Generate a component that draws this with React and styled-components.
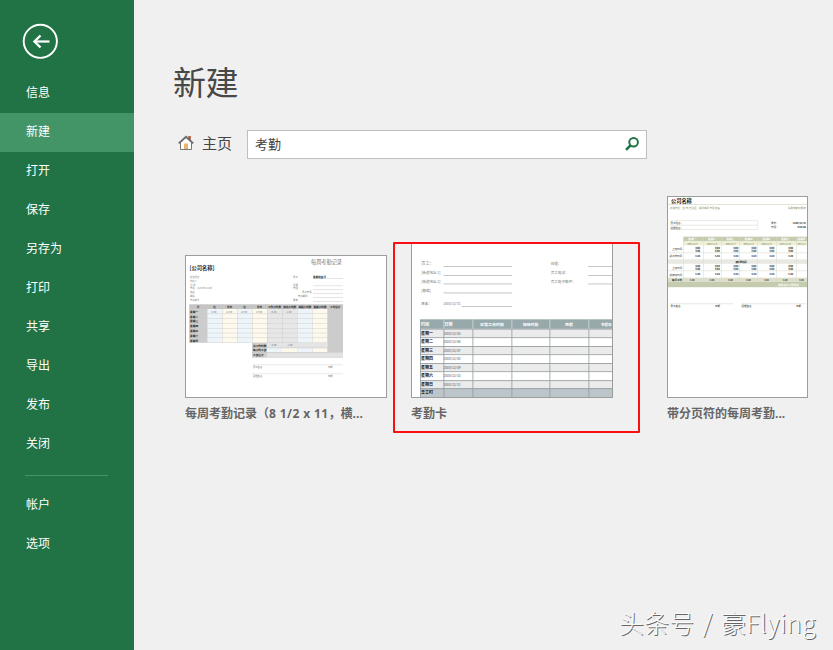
import React from "react";
import styled, { createGlobalStyle } from "styled-components";

const Global = createGlobalStyle`
  * { box-sizing: border-box; }
  body { margin: 0; overflow: hidden; }
`;

const Page = styled.div`
  position: relative;
  display: flex;
  width: 833px;
  height: 650px;
  overflow: hidden;
  background: #f0f0f0;
  color: #444;
  font-family: "Open Sans", "Noto Sans CJK SC", sans-serif;
`;

const Sidebar = styled.nav`
  flex: none;
  width: 134px;
  background: #217346;
`;

const BackButton = styled.button`
  display: block;
  width: 36px;
  height: 36px;
  margin: 23px 0 15px 22px;
  padding: 0;
  border: 0;
  background: none;
  svg { display: block; }
`;

const NavItem = styled.a`
  display: flex;
  align-items: center;
  height: 39px;
  padding: 0 0 4px 26px;
  background: ${(p) => (p.$active ? "#439467" : "transparent")};
  color: #fff;
  font-family: "Noto Sans CJK SC", sans-serif;
  font-size: 12px;
  line-height: 18px;
`;

const Divider = styled.hr`
  width: 83px;
  height: 1px;
  margin: 11px 0 10px 25px;
  border: 0;
  background: #439467;
`;

const Main = styled.main`
  flex: 1;
  min-width: 0;
  padding-top: 57px;
`;

const Title = styled.h1`
  margin: 0 0 0 39px;
  font: 400 33px/48px "Noto Sans CJK SC", sans-serif;
  letter-spacing: -0.5px;
  color: #484848;
`;

const SearchRow = styled.div`
  display: flex;
  align-items: center;
  height: 29px;
  margin: 25px 0 0 43px;
`;

const HomeLink = styled.a`
  display: flex;
  align-items: center;
  gap: 7px;
  width: 70px;
  padding-bottom: 3px;
  font: 15px/22px "Noto Sans CJK SC", sans-serif;
`;

const SearchBox = styled.div`
  display: flex;
  align-items: center;
  justify-content: space-between;
  width: 400px;
  height: 29px;
  padding: 0 6px 1px 7px;
  border: 1px solid #bfbfbf;
  background: #fff;
  font: 13px/20px "Noto Sans CJK SC", sans-serif;
`;

const Gallery = styled.div`
  display: flex;
  align-items: flex-end;
  height: 274px;
  padding-left: 51px;
`;

const Caption = styled.figcaption`
  height: 35px;
  padding-top: 7px;
  overflow: hidden;
  white-space: nowrap;
  font-size: 12px;
  font-weight: 700;
  line-height: 18px;
  color: #666;
`;

const PaperSize = styled.span`
  letter-spacing: 0.4px;
`;

const Card = styled.figure`
  flex: none;
  width: ${(p) => p.$width}px;
  margin: 0 ${(p) => p.$gap || 0}px 0 0;
`;

const SelectedCard = styled(Card)`
  padding-left: 16px;
  border: 2px solid #fa0f12;
  border-radius: 1px;
  ${Caption} { height: 33px; }
`;

const Sheet = styled.svg`
  display: block;
  border: 1px solid #9a9f9c;
  border-top-width: ${(p) => (p.$openTop ? 0 : 1)}px;
  background: #fff;
`;

const Watermark = styled.div`
  position: absolute;
  left: 619px;
  top: 604px;
  white-space: nowrap;
  font: 300 25px/36px "Noto Sans CJK SC", sans-serif;
  word-spacing: 3px;
  color: #fafafa;
  text-shadow: 1px 1px 0.5px #666;
`;

const WatermarkName = styled.span`
  letter-spacing: 0.45px;
`;

const MINI = '"Noto Sans CJK SC", sans-serif';

// Text inside a miniature sheet.
const T = ({ x, y, s = 2.8, c = "#777", b, a, children, w }) => (
  <text x={x} y={y} fontSize={s} fill={c} fontWeight={b ? 700 : 400} textAnchor={a}
    textLength={w} lengthAdjust="spacingAndGlyphs" fontFamily={MINI}>{children}</text>
);

const Line = ({ x1, x2, y, c = "#a8b0b0" }) => (
  <rect x={x1} y={y} width={x2 - x1} height="0.7" fill={c} />
);

const weekdays = ["一", "二", "三", "四", "五", "六", "日"];

const BLUE = "#edf5fa";
const CREAM = "#fdf9ec";
const weekCols = [
  [3.3, "#cccccc", "日"], [21, BLUE, "在"], [36, CREAM, "外出"], [51, BLUE, "在"],
  [66, CREAM, "外出"], [81, "#e7e7e7", "工作小时数"], [96, "#e7e7e7", "加班小时数"],
  [111.3, BLUE, "病假小时数"], [126.5, CREAM, "假期小时数"], [141.5, "#cccccc", "工时总计"], [157],
];

function WeeklySheet() {
  return (
    <Sheet width="202" height="143" viewBox="0 0 200 141">
      <T x="3.5" y="14" s="5.3" c="#222" b w="25">[公司名称]</T>
      <T x="125" y="7.6" s="5.3" c="#777" w="31">每周考勤记录</T>
      {["街道地址", "地址 2", "省/市", "电话：(425)555-0100", "传真", "邮编", "电子邮件"].map((t, i) => (
        <T key={t} x="4" y={22 + i * 3.8} s="2.3" c="#888">{t}</T>
      ))}
      {[["员工", 22, 107], ["经理", 29.5, 107], ["电话", 33.4, 107], ["员工电话", 37.3, 116], ["电子邮件", 41.2, 112], ["周末", 45, 107]].map(([t, y, x]) => (
        <g key={t}><T x={x} y={y} s="2.4">{t}</T><Line x1={127} x2={157} y={y} c="#d9d9d9" /></g>
      ))}
      <T x="127" y="22" s="2.6" c="#111" b>星期结束日</T>
      {weekCols.slice(0, -1).map(([x, c, name], i) => {
        const w = weekCols[i + 1][0] - x;
        return (
          <g key={i}>
            <rect x={x} y="48.3" width={w} height="4.8" fill="#c4c4c4" />
            <rect x={x} y="53" width={w} height={i < 5 ? 33.6 : 43} fill={c} />
            <T x={x + w / 2} y="51.8" s="2.6" c="#222" b a="middle">{name}</T>
            <rect x={x} y="48.3" width=".4" height={i < 5 ? 38.3 : 52} fill="#c8c8c8" />
          </g>
        );
      })}
      {weekdays.map((d, i) => (
        <g key={d}>
          <T x="4" y={56.7 + i * 4.8} s="2.7" c="#111" b>星期{d}</T>
          <rect x="3.3" y={57.6 + i * 4.8} width="138.2" height=".45" fill="#cbcbcb" />
        </g>
      ))}
      {[28, 43, 58, 73, 88, 103].map((x, i) => (
        <T key={x} x={x} y="56.5" s="2.5" a="middle">{["8:00", "11:30", "12:30", "17:00", "8.00", "1.00"][i]}</T>
      ))}
      <rect x="66" y="87" width="75.5" height="4.8" fill="#e4e4e4" />
      <rect x="81" y="91.8" width="15" height="4.8" fill={BLUE} />
      <rect x="96" y="91.8" width="15.3" height="4.8" fill={CREAM} />
      <rect x="81" y="96.3" width="76" height="4.6" fill="#e2e2e2" />
      <rect x="66" y="87" width="15" height="14" fill="#cecece" />
      {["总工作时数", "每小时工资", "工资合计"].map((t, i) => (
        <g key={t}>
          <T x="67" y={90.6 + i * 4.7} s="2.7" c="#111" b>{t}</T>
          <Line x1={66} x2={157} y={91.5 + i * 4.7} c="#c9c9c9" />
        </g>
      ))}
      <T x="88" y="90" s="2.5" a="middle">8.00</T>
      <T x="104" y="90" s="2.5" a="middle">1.00</T>
      {[109, 118].map((y, i) => (
        <g key={y}>
          <Line x1={66} x2={157} y={y - 0.5} c="#e0e0e0" />
          <T x="67" y={y + 2.5} s="2.3">{i ? "经理签名" : "员工签名"}</T>
          <T x="142" y={y + 2.5} s="2.3">日期</T>
        </g>
      ))}
    </Sheet>
  );
}

const cardRows = [84.7, 93.3, 102, 110.3, 119, 127.3, 136.3, 144.3, 153];
const cardCols = [31.5, 60.5, 99.5, 137.5, 176.5];
const cardDates = ["05", "06", "07", "08", "09", "10", "11"];

function TimeCardSheet() {
  return (
    <Sheet $openTop width="202" height="154" viewBox="0 0 200 153">
      {[["员工：", 22], ["[街道地址 1]", 31], ["[街道地址 2]", 39.6], ["[邮编]", 48.6], ["周末：", 62]].map(([t, y], i) => (
        <g key={t}>
          <T x="9.3" y={y - 1} s={i ? 3.5 : 4.1}>{t}</T>
          <Line x1={i === 4 ? 49.7 : 31.5} x2={100} y={y} />
        </g>
      ))}
      <T x="31.5" y="61" s="3.5" w="17">2008/12/31</T>
      {[["经理：", 22], ["员工电话：", 31], ["员工电子邮件：", 39.6]].map(([t, y]) => (
        <g key={t}><T x="138.7" y={y - 1} s="3.6">{t}</T><Line x1={176} x2={200} y={y} /></g>
      ))}
      <rect x="8" y="75.3" width="192" height="10" fill="#97a9aa" />
      {cardRows.slice(0, -1).map((y, i) => (
        <g key={y}>
          <rect x="8" y={y} width="192" height={cardRows[i + 1] - y} fill={i === 7 ? "#bcc5ca" : i % 2 ? "#fff" : "#ebebeb"} />
          <rect x="8" y={y} width="192" height=".8" fill="#8f989b" />
          <T x="9" y={y + 6} s="4" c="#111" b>{i === 7 ? "总工时" : `星期${weekdays[i]}`}</T>
          {i < 7 && <T x="31.5" y={y + 6} s="3.5" c="#555" w="17">{`2008/12/${cardDates[i]}`}</T>}
        </g>
      ))}
      {[8, ...cardCols].map((x) => <rect key={x} x={x} y="85" width=".8" height="68" fill="#929b9e" />)}
      {cardCols.map((x) => <rect key={x} x={x} y="75.3" width=".8" height="9.5" fill="#d5dddd" />)}
      <T x="9" y="82" s="4" c="#fff" b>时间</T>
      <T x="32.5" y="82" s="4" c="#fff" b>日期</T>
      <T x="80" y="82" s="3.9" c="#fff" b a="middle" w="24">正常工作时数</T>
      <T x="118.5" y="82" s="3.9" c="#fff" b a="middle">加班时数</T>
      <T x="157" y="82" s="3.9" c="#fff" b a="middle">病假</T>
      <T x="189" y="82" s="3.9" c="#fff" b w="10.5">节假日</T>
    </Sheet>
  );
}

const breakCols = [15.3, 35, 53.5, 71.5, 89.5, 108.3, 128];

function BreaksSheet() {
  return (
    <Sheet width="141" height="202" viewBox="0 0 139 200">
      <T x="3" y="6" s="5.2" c="#111" b>公司名称</T>
      <Line x1={0} x2={139} y={7.3} c="#d5d9c5" />
      <T x="2" y="12" s="2.6" c="#8b9464" w="50">街道地址，省/市/自治区，邮政编码 电话 传真</T>
      <T x="120" y="12" s="2.6" c="#8b9464" w="18">每周考勤记录表</T>
      {[23.4, 27.8, 32.3].map((y) => <Line key={y} x1={2} x2={90} y={y} c="#e1e3d9" />)}
      <rect x="89.5" y="23.5" width=".6" height="9" fill="#e1e3d9" />
      {[["员工姓名：", "周末：", "2008/12/31"], ["经理姓名：", "电话：", "8:00:00"]].map(([l, m, r], i) => (
        <g key={l}>
          <T x="2.5" y={27 + i * 4.6} s="2.5" c="#333">{l}</T>
          <T x="103" y={26.5 + i * 4.6} s="2.5" c="#333">{m}</T>
          <T x="138" y={26.5 + i * 4.6} s="2.4" c="#111" b a="end">{r}</T>
        </g>
      ))}
      <rect x="15.3" y="39.7" width="124" height="4.7" fill="#c4cbaf" />
      <rect x="15.3" y="44.3" width="124" height="4" fill="#eef0d5" />
      <rect x="0" y="62.3" width="139" height="4.5" fill="#e8e9e2" />
      <rect x="0" y="80.7" width="139" height="4.3" fill="#dcdfcb" />
      <rect x="0" y="85" width="139" height="5.2" fill="#c4cbaf" />
      {[55.5, 73.5].map((y) => <Line key={y} x1={0} x2={139} y={y} c="#dfe1d5" />)}
      <T x="73" y="65.8" s="2.8" c="#111" b a="middle">加班时间</T>
      {[["上班时间", 53], ["总工作时间", 60], ["上班时间", 71.5], ["总加班时间", 78.5], ["每日工时", 84]].map(([t, y], i) => (
        <T key={i} x="14" y={y} s="2.5" c="#222" b={i === 4} a="end">{t}</T>
      ))}
      {breakCols.map((x, i) => {
        const last = i === 6;
        const mid = last ? x + 5.5 : x + 9;
        return (
          <g key={x}>
            <rect x={x} y="39.7" width=".5" height="45" fill="#d7dac9" />
            <T x={mid} y="43.3" s="2.7" c="#fff" b a="middle">星期{weekdays[i]}</T>
            <T x={mid} y="47.5" s="2.2" c="#757c55" a="middle" w={last ? 8.5 : undefined}>{`2008/12/${i + 5}`}</T>
            {!last && [49.5, 67.8].map((y) => (
              <g key={y}>
                <rect x={x + 12} y={y} width="4.8" height="5.8" fill="#e4e5df" />
                <T x={x + 14.4} y={y + 2.6} s="2.2" c="#222" b a="middle">8:00</T>
                <T x={x + 14.4} y={y + 5.2} s="2.2" c="#222" b a="middle">5:00</T>
                <T x={x + 14.4} y={y + 10} s="2.3" c="#111" b a="middle">8.00</T>
              </g>
            ))}
            <T x={mid} y="84" s="2.2" c="#333" b a="middle">8.00</T>
          </g>
        );
      })}
      <T x="110" y="88.8" s="2.6" c="#fff" b>本周总计工作时间</T>
      <Line x1={2} x2={65} y={106.5} c="#d9dbd1" />
      <Line x1={73} x2={138} y={106.5} c="#d9dbd1" />
      {[["员工签名", 2.5], ["日期", 47], ["经理签名", 73.5], ["日期", 128]].map(([t, x]) => (
        <T key={x} x={x} y="109.8" s="2.5" c="#222">{t}</T>
      ))}
    </Sheet>
  );
}

const BackIcon = () => (
  <svg width="36" height="36" viewBox="0 0 36 36" fill="none" stroke="#fff">
    <circle cx="18.3" cy="18.3" r="16.6" strokeWidth="1.9" />
    <path d="M27.5 18.5H12" strokeWidth="2.2" />
    <path d="M18.500 12.500l-6 6 6 6" strokeWidth="2.4" />
  </svg>
);

const HomeIcon = () => (
  <svg width="18" height="18" viewBox="0 0 18 18">
    <path d="M11.3 2h2.5v4.5l-2.5-2z" fill="#b5573c" />
    <path d="M3.500 8.500L9 3.500l5.500 5v7h-11z" fill="#fff" stroke="#777" />
    <path d="M7 9.500h4V15H7z" fill="#e8b56e" />
    <path d="M1.700 9.300L9 2.700l7.300 6.600" fill="none" stroke="#6b6b6b" strokeWidth="1.700" />
  </svg>
);

const SearchIcon = () => (
  <svg width="16" height="16" viewBox="0 0 16 16" fill="none" stroke="#217346">
    <circle cx="9.600" cy="6.300" r="4.300" strokeWidth="2" />
    <path d="M6.400 9.500L2 13.900" strokeWidth="2.500" />
  </svg>
);

const primaryItems = ["信息", "新建", "打开", "保存", "另存为", "打印", "共享", "导出", "发布", "关闭"];
const secondaryItems = ["帐户", "选项"];

export default function App() {
  return (
    <Page>
      <Global />
      <Sidebar>
        <BackButton aria-label="返回"><BackIcon /></BackButton>
        {primaryItems.map((t) => <NavItem key={t} $active={t === "新建"}>{t}</NavItem>)}
        <Divider />
        {secondaryItems.map((t) => <NavItem key={t}>{t}</NavItem>)}
      </Sidebar>
      <Main>
        <Title>新建</Title>
        <SearchRow>
          <HomeLink><HomeIcon />主页</HomeLink>
          <SearchBox>考勤<SearchIcon /></SearchBox>
        </SearchRow>
        <Gallery>
          <Card $width={202} $gap={6}>
            <WeeklySheet />
            <Caption>每周考勤记录（<PaperSize>8 1/2 x 11</PaperSize>，横...</Caption>
          </Card>
          <SelectedCard $width={247} $gap={27}>
            <TimeCardSheet />
            <Caption>考勤卡</Caption>
          </SelectedCard>
          <Card $width={141}>
            <BreaksSheet />
            <Caption>带分页符的每周考勤...</Caption>
          </Card>
        </Gallery>
      </Main>
      <Watermark>头条号 / <WatermarkName>豪Flying</WatermarkName></Watermark>
    </Page>
  );
}
